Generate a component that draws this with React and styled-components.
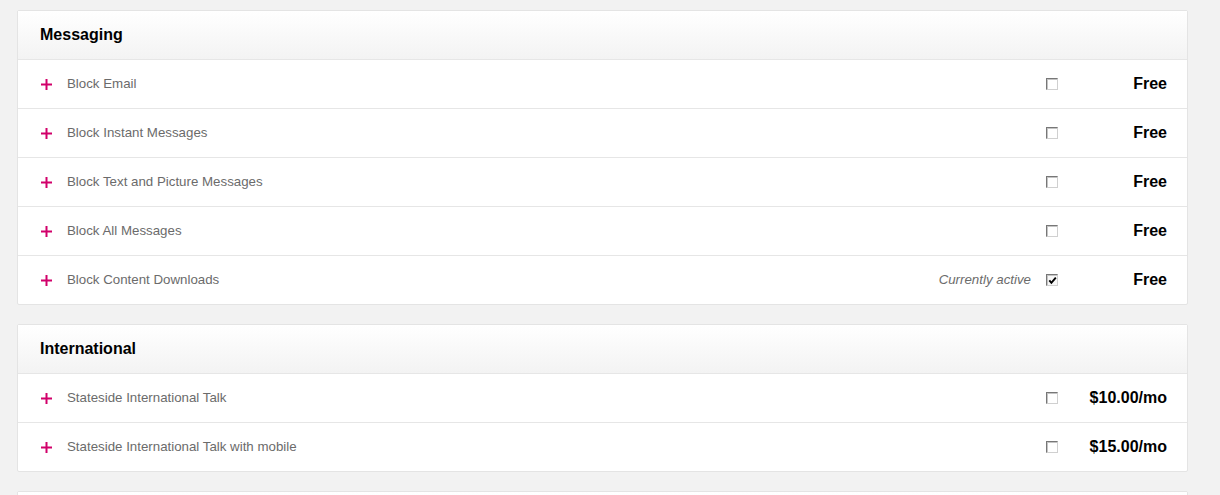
import React from "react";
import styled, { createGlobalStyle } from "styled-components";

const GlobalStyle = createGlobalStyle`
	body {
		margin: 0;
		background: #f2f2f2;
		font-family: "Liberation Sans", Arial, sans-serif;
	}
`;

const sections = [
	{
		title: "Messaging",
		items: [
			{ name: "Block Email", price: "Free" },
			{ name: "Block Instant Messages", price: "Free" },
			{ name: "Block Text and Picture Messages", price: "Free" },
			{ name: "Block All Messages", price: "Free" },
			{ name: "Block Content Downloads", price: "Free", active: true },
		],
	},
	{
		title: "International",
		items: [
			{ name: "Stateside International Talk", price: "$10.00/mo" },
			{ name: "Stateside International Talk with mobile", price: "$15.00/mo" },
		],
	},
	{ title: "", items: [] },
];

const Plus = () => (
	<PlusIcon width="11" height="11" viewBox="0 0 11 11">
		<rect x="0" y="4.5" width="11" height="2" fill="#d1006a" />
		<rect x="4.5" y="0" width="2" height="11" fill="#d1006a" />
	</PlusIcon>
);

const App = () => {
	return (
		<Page>
			<GlobalStyle />
			{sections.map((s, i) => (
				<Card key={i}>
					<Header>{s.title}</Header>
					{s.items.map((item) => (
						<Row key={item.name}>
							<Plus />
							<Name>{item.name}</Name>
							{item.active && <Status>Currently active</Status>}
							<Check checked={item.active}>
								{item.active && (
									<svg width="9" height="9" viewBox="0 0 9 9">
										<path d="M1.3 4.3 L3.4 6.8 L7.8 1.6" stroke="#000" strokeWidth="1.9" fill="none" />
									</svg>
								)}
							</Check>
							<Price>{item.price}</Price>
						</Row>
					))}
				</Card>
			))}
		</Page>
	);
};

const Page = styled.div`
	padding: 10px 32px 0 17px;
	display: flex;
	flex-direction: column;
	gap: 19px;
`;

const Card = styled.div`
	background: #fff;
	border: 1px solid #e4e4e4;
	border-radius: 2px;
`;

const Header = styled.div`
	height: 48px;
	box-sizing: border-box;
	padding: 0 22px;
	display: flex;
	align-items: center;
	font-size: 16px;
	font-weight: bold;
	color: #000;
	background: linear-gradient(#ffffff, #f3f3f3);
`;

const Row = styled.div`
	height: 49px;
	box-sizing: border-box;
	padding: 0 20px 0 23px;
	display: flex;
	align-items: center;
	border-top: 1px solid #e6e6e6;
`;

const PlusIcon = styled.svg`
	flex: none;
	margin-right: 15px;
`;

const Name = styled.div`
	flex: 1;
	font-size: 13.3px;
	color: #6b6b6b;
	padding-bottom: 2px;
`;

const Status = styled.div`
	font-size: 13.3px;
	font-style: italic;
	color: #6b6b6b;
	margin-right: 15px;
	padding-bottom: 2px;
`;

const Check = styled.span`
	flex: none;
	width: 12px;
	height: 12px;
	box-sizing: border-box;
	border: 1px solid #d0d0d0;
	border-top-color: #777;
	border-left-color: #777;
	box-shadow: inset 1px 1px 0 #c4c4c4;
	background: ${(p) => (p.checked ? "#f7f7f7" : "#fff")};
	display: flex;
	align-items: center;
	justify-content: center;
	margin-right: 8px;
`;

const Price = styled.div`
	width: 101px;
	text-align: right;
	font-size: 16px;
	font-weight: bold;
	color: #000;
`;

export default App;
